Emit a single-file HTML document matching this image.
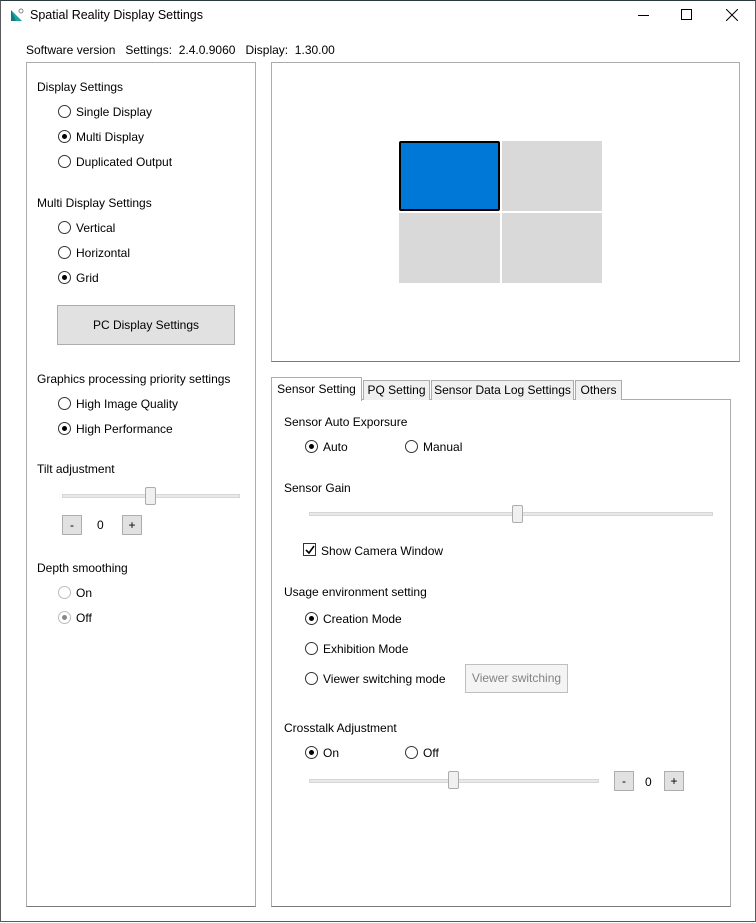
<!DOCTYPE html>
<html><head><meta charset="utf-8"><style>
*{box-sizing:border-box;margin:0;padding:0}
body{width:756px;height:923px;background:#fff;font-family:"Liberation Sans",sans-serif;font-size:12px;color:#000;position:relative;overflow:hidden}
.a{position:absolute;white-space:nowrap}
.win{position:absolute;left:0;top:0;width:756px;height:922px;border:1px solid #5a5a5a;border-top:1px solid #2a3a40}
.box{position:absolute;border:1px solid #acacac;border-bottom:1px solid #7a7a7a;background:#fff}
.r{position:absolute;width:13px;height:13px;border:1px solid #333;border-radius:50%;background:#fff}
.r.on::after{content:"";position:absolute;left:3px;top:3px;width:5px;height:5px;border-radius:50%;background:#000}
.r.dis{border-color:#bcbcbc}
.r.dis.on::after{background:#888}
.btn{position:absolute;background:#e1e1e1;border:1px solid #adadad;text-align:center}
.track{position:absolute;height:4px;background:#e7eaea;border:1px solid #d6d6d6}
.thumb{position:absolute;width:11px;height:18px;background:#f0f0f0;border:1px solid #acacac;border-radius:2px}
.tab{position:absolute;background:#f0f0f0;border:1px solid #acacac;border-bottom:none;text-align:center;line-height:19px}
.cell{position:absolute;background:#d9d9d9}
</style></head><body>
<div class="win"></div>
<svg class="a" style="left:10px;top:8px" width="14" height="14"><polygon points="1,2 1,13 12,13" fill="#1aa3a3"/><polygon points="1,2 6,13 1,13" fill="#127a80"/><circle cx="11" cy="3" r="2" fill="none" stroke="#888" stroke-width="1"/></svg>
<div class="a" style="left:30px;top:8px;font-size:12.5px">Spatial Reality Display Settings</div>
<div class="a" style="left:638px;top:15px;width:11px;height:1px;background:#000"></div>
<div class="a" style="left:681px;top:9px;width:11px;height:11px;border:1px solid #000"></div>
<svg class="a" style="left:726px;top:9px" width="12" height="12"><path d="M0 0L12 12M12 0L0 12" stroke="#000" stroke-width="1"/></svg>
<div class="a" style="left:26px;top:43px">Software version&nbsp;&nbsp; Settings:&nbsp; 2.4.0.9060&nbsp;&nbsp; Display:&nbsp; 1.30.00</div>

<div class="box" style="left:26px;top:62px;width:230px;height:845px"></div>
<div class="a" style="left:37px;top:80px">Display Settings</div>
<div class="r" style="left:58px;top:105px"></div><div class="a" style="left:76px;top:105px">Single Display</div>
<div class="r on" style="left:58px;top:130px"></div><div class="a" style="left:76px;top:130px">Multi Display</div>
<div class="r" style="left:58px;top:155px"></div><div class="a" style="left:76px;top:155px">Duplicated Output</div>
<div class="a" style="left:37px;top:196px">Multi Display Settings</div>
<div class="r" style="left:58px;top:221px"></div><div class="a" style="left:76px;top:221px">Vertical</div>
<div class="r" style="left:58px;top:246px"></div><div class="a" style="left:76px;top:246px">Horizontal</div>
<div class="r on" style="left:58px;top:271px"></div><div class="a" style="left:76px;top:271px">Grid</div>
<div class="btn" style="left:57px;top:305px;width:178px;height:40px;line-height:38px">PC Display Settings</div>
<div class="a" style="left:37px;top:372px">Graphics processing priority settings</div>
<div class="r" style="left:58px;top:397px"></div><div class="a" style="left:76px;top:397px">High Image Quality</div>
<div class="r on" style="left:58px;top:422px"></div><div class="a" style="left:76px;top:422px">High Performance</div>
<div class="a" style="left:37px;top:462px">Tilt adjustment</div>
<div class="track" style="left:62px;top:494px;width:178px"></div>
<div class="thumb" style="left:145px;top:487px"></div>
<div class="btn" style="left:62px;top:515px;width:20px;height:20px;line-height:18px">-</div>
<div class="a" style="left:97px;top:518px">0</div>
<div class="btn" style="left:122px;top:515px;width:20px;height:20px;line-height:18px">+</div>
<div class="a" style="left:37px;top:561px">Depth smoothing</div>
<div class="r dis" style="left:58px;top:586px"></div><div class="a" style="left:76px;top:586px">On</div>
<div class="r dis on" style="left:58px;top:611px"></div><div class="a" style="left:76px;top:611px">Off</div>

<div class="box" style="left:271px;top:62px;width:469px;height:300px"></div>
<div class="a" style="left:399px;top:141px;width:101px;height:70px;background:#0078d7;border:2px solid #000;border-radius:2px"></div>
<div class="cell" style="left:502px;top:141px;width:100px;height:70px"></div>
<div class="cell" style="left:399px;top:213px;width:101px;height:70px"></div>
<div class="cell" style="left:502px;top:213px;width:100px;height:70px"></div>

<div class="box" style="left:271px;top:399px;width:460px;height:508px"></div>
<div class="tab" style="left:363px;top:380px;width:67px;height:20px">PQ Setting</div>
<div class="tab" style="left:431px;top:380px;width:143px;height:20px">Sensor Data Log Settings</div>
<div class="tab" style="left:575px;top:380px;width:47px;height:20px">Others</div>
<div class="tab" style="left:271px;top:377px;width:91px;height:24px;background:#fff;line-height:22px">Sensor Setting</div>

<div class="a" style="left:284px;top:415px">Sensor Auto Exporsure</div>
<div class="r on" style="left:305px;top:440px"></div><div class="a" style="left:323px;top:440px">Auto</div>
<div class="r" style="left:405px;top:440px"></div><div class="a" style="left:423px;top:440px">Manual</div>
<div class="a" style="left:284px;top:481px">Sensor Gain</div>
<div class="track" style="left:309px;top:512px;width:404px"></div>
<div class="thumb" style="left:512px;top:505px"></div>
<div class="a" style="left:303px;top:543px;width:13px;height:13px;border:1px solid #333"></div>
<svg class="a" style="left:305px;top:545px" width="10" height="10"><path d="M1 5L4 8L9 1" stroke="#000" stroke-width="1.6" fill="none"/></svg>
<div class="a" style="left:321px;top:544px">Show Camera Window</div>
<div class="a" style="left:284px;top:585px">Usage environment setting</div>
<div class="r on" style="left:305px;top:612px"></div><div class="a" style="left:323px;top:612px">Creation Mode</div>
<div class="r" style="left:305px;top:642px"></div><div class="a" style="left:323px;top:642px">Exhibition Mode</div>
<div class="r" style="left:305px;top:672px"></div><div class="a" style="left:323px;top:672px">Viewer switching mode</div>
<div class="btn" style="left:465px;top:664px;width:103px;height:29px;line-height:27px;background:#f4f4f4;border-color:#bfbfbf;color:#838383">Viewer switching</div>
<div class="a" style="left:284px;top:721px">Crosstalk Adjustment</div>
<div class="r on" style="left:305px;top:746px"></div><div class="a" style="left:323px;top:746px">On</div>
<div class="r" style="left:405px;top:746px"></div><div class="a" style="left:423px;top:746px">Off</div>
<div class="track" style="left:309px;top:779px;width:290px"></div>
<div class="thumb" style="left:448px;top:771px"></div>
<div class="btn" style="left:614px;top:771px;width:20px;height:20px;line-height:18px">-</div>
<div class="a" style="left:645px;top:775px">0</div>
<div class="btn" style="left:664px;top:771px;width:20px;height:20px;line-height:18px">+</div>
</body></html>
